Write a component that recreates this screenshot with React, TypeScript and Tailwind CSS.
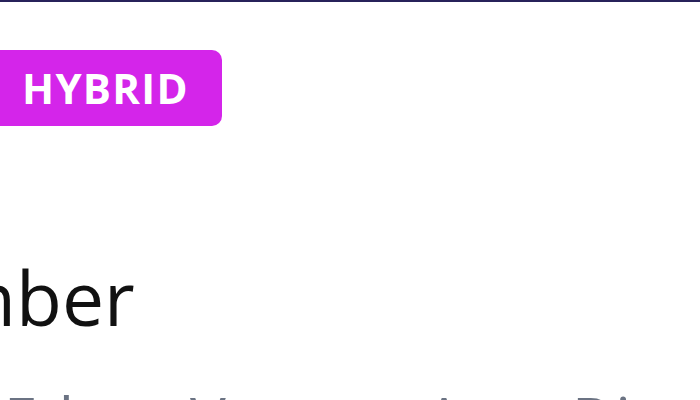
import React from 'react';

const words = [
    { text: 'Edge', className: 'w-[186px]' },
    { text: 'Venues', className: 'w-[235px]' },
    { text: 'Arts', className: 'w-[147px]' },
    { text: 'District', className: '' },
];

export default function App() {
    return (
        <div className="w-[700px] h-[400px] overflow-hidden bg-white flex flex-col font-['Open_Sans',sans-serif]">
            <div className="h-[2px] bg-[#27225a] shrink-0" />

            <div className="mt-[48px] flex">
                <span className="ml-[-11px] h-[76px] px-[33px] flex items-center rounded-[10px] bg-[#d425ea] text-white text-[42px] leading-none font-bold tracking-[0.03em]">
                    HYBRID
                </span>
            </div>

            <div className="mt-[134px] whitespace-nowrap">
                <span className="ml-[-228px] text-[75px] leading-none font-normal text-[#111111]">
                    December
                </span>
            </div>

            <div className="mt-[53px] flex whitespace-nowrap text-[60px] leading-none text-[#6b7383] pl-[4px]">
                {words.map((w) => (
                    <span key={w.text} className={`shrink-0 ${w.className}`}>{w.text}</span>
                ))}
            </div>
        </div>
    );
}
